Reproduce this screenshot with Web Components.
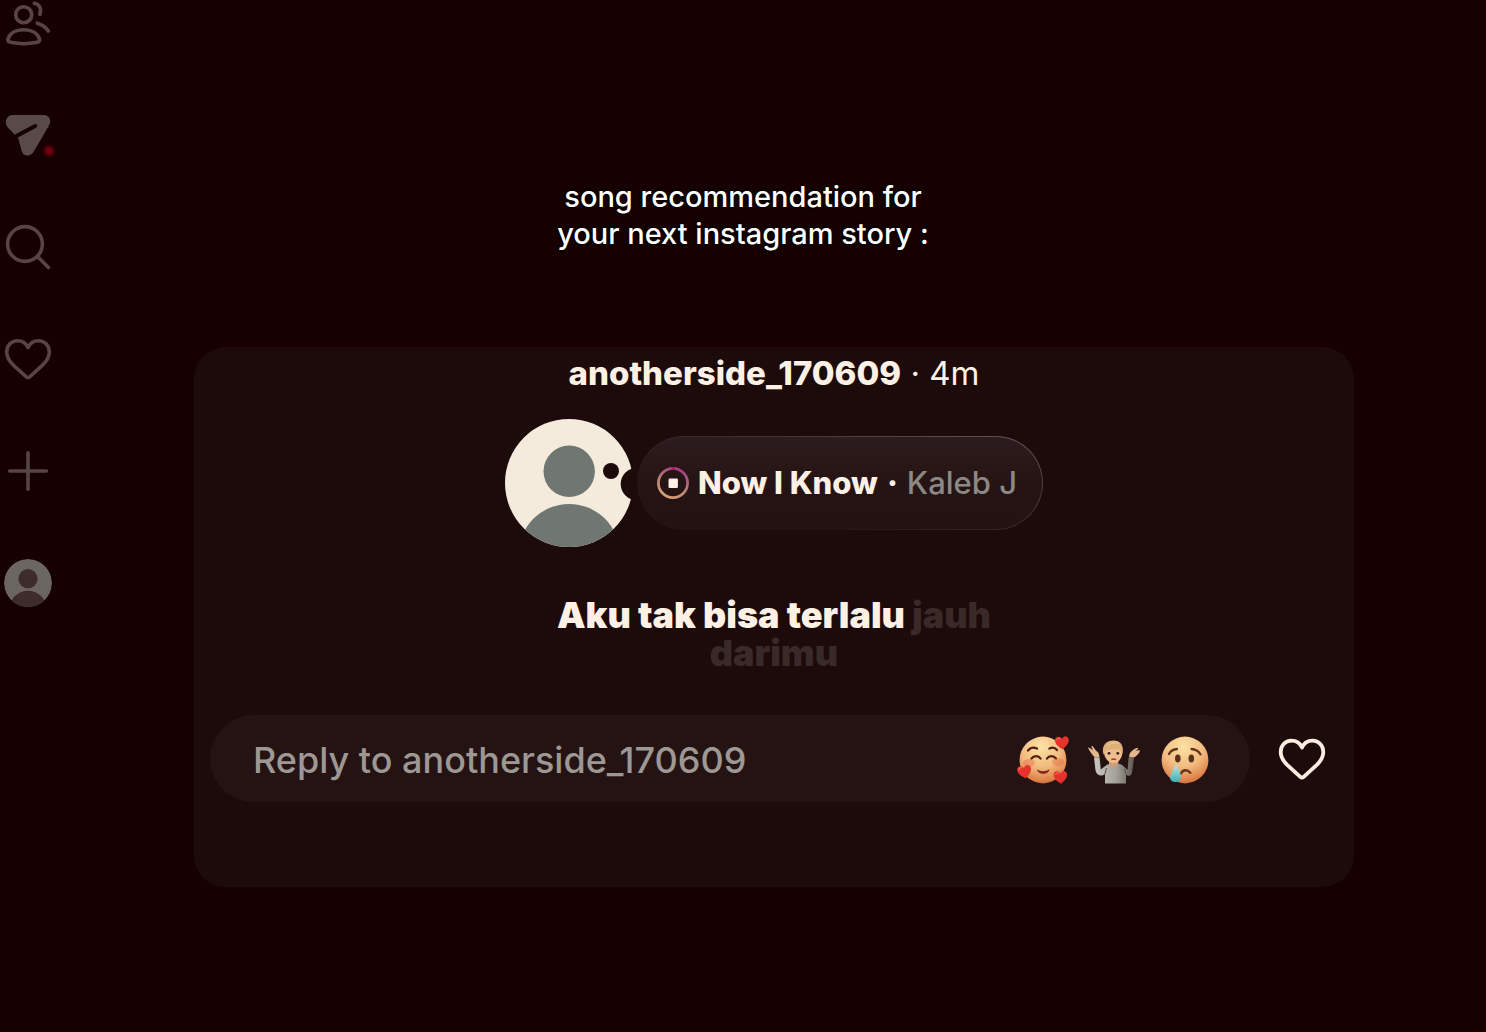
<!DOCTYPE html>
<html lang="id">
<head>
<meta charset="utf-8">
<meta name="viewport" content="width=device-width, initial-scale=1">
<title>Story</title>
<style>
  html { height: 100%; background: #170002; }
  body { margin: 0; min-height: 100%; font-family: Inter, "Noto Sans", sans-serif; color: #fdf0e4; }
</style>
</head>
<body>
<story-page>
  <side-nav slot="nav"></side-nav>
  <story-caption slot="caption">song recommendation for<br>your next instagram story :</story-caption>
  <story-card>
    <story-author slot="author" name="anotherside_170609" age="4m"></story-author>
    <music-note slot="music" song="Now I Know" artist="Kaleb J"></music-note>
    <lyric-lines slot="lyrics">Aku tak bisa terlalu <span slot="next">jauh</span><span slot="rest">darimu</span></lyric-lines>
    <reply-bar slot="reply" to="anotherside_170609"></reply-bar>
  </story-card>
</story-page>

<script>
class BaseElement extends HTMLElement {
  connectedCallback() {
    if (this.shadowRoot) return;
    this.attachShadow({ mode: "open" }).innerHTML =
      `<style>*{box-sizing:border-box} svg{display:block;overflow:visible} button,input,a{font:inherit;color:inherit;background:none;border:0;padding:0;margin:0}</style>` + this.render();
  }
}

const HEART = "M28 11.5C26 7 22 4.7 17.5 4.7C11 4.7 6.7 9.7 6.7 16C6.7 22 10 26 14 29.7L26.3 40.8C27.4 41.8 28.6 41.8 29.7 40.8L42 29.7C46 26 49.3 22 49.3 16C49.3 9.7 45 4.7 38.5 4.7C34 4.7 30 7 28 11.5Z";

customElements.define("story-page", class extends BaseElement {
  render() {
    return `<style>
      :host { display: grid; grid-template-columns: 56px minmax(0, 1fr); grid-template-rows: auto 1fr; }
      nav { grid-column: 1; grid-row: 1 / 3; z-index: 1; }
      header { grid-column: 1 / 3; grid-row: 1; padding-top: 178px; }
      main { grid-column: 2; grid-row: 2; padding: 95px 132px 40px 138px; }
    </style>
    <nav aria-label="Main"><slot name="nav"></slot></nav>
    <header><slot name="caption"></slot></header>
    <main><slot></slot></main>`;
  }
});

customElements.define("side-nav", class extends BaseElement {
  render() {
    const icons = {
      Friends: `<circle cx="23.7" cy="14.7" r="8"/><path d="M7.8 39.5C9.5 33.5 15.5 29.7 23.7 29.7S38 33.5 39.6 39.5C40 41.3 38.5 42 37 42.3C29 44 18.5 44 10.4 42.3C8.9 42 7.4 41.3 7.8 39.5Z"/><path d="M34.2 3.2C39.6 4 42 8.8 39.8 14.2M37.3 23.2C42 24.6 46 27.4 48.3 31"/>`,
      Messages: `<path class="solid" d="M13 3H43.5C49.5 3 52 8.5 49 13.5L33.5 40C31 44.5 23.5 45 21.8 39.5L18.3 26.5L8 15.8C3.5 11 6 3 13 3Z"/><path class="slit" d="M15.5 24.6L35.2 14"/><circle class="dot" cx="49" cy="39" r="4.8"/>`,
      Search: `<circle cx="25" cy="20" r="17.4"/><path d="M38 33L48.5 43.5"/>`,
      Likes: `<path d="${HEART}"/>`,
      Create: `<path d="M28 4.7V41.3M9.8 23H46.4"/>`,
      Profile: `<clipPath id="c"><circle cx="28" cy="23" r="24"/></clipPath><g clip-path="url(#c)" stroke="none"><circle cx="28" cy="23" r="24" fill="#6b6662"/><circle cx="28" cy="18.7" r="9.6" fill="#3e2c2c"/><circle cx="28" cy="49.6" r="18.8" fill="#3e2c2c"/></g>`
    };
    return `<style>
      :host { display: flex; flex-direction: column; gap: 66px; padding-left: 4px; }
      a { display: block; width: 48px; height: 46px; }
      svg { width: 48px; height: 46px; fill: none; stroke: #574546; stroke-width: 3.6; stroke-linecap: round; stroke-linejoin: round; }
      .solid { fill: #574a49; stroke: none; }
      .slit { stroke: #170002; stroke-width: 4; }
      .dot { fill: #750010; stroke: none; filter: blur(1.6px); }
    </style>` + Object.entries(icons).map(([n, s]) =>
      `<a href="#${n.toLowerCase()}" aria-label="${n}"><svg viewBox="4 0 48 46" aria-hidden="true">${s}</svg></a>`).join("");
  }
});

customElements.define("story-caption", class extends BaseElement {
  render() {
    return `<style>
      :host { display: block; text-align: center; font-size: 29px; line-height: 37px; font-weight: 500; color: #fff; text-shadow: 0 0 3px #000, 0 0 3px #000; }
      p { margin: 0; }
    </style><p><slot></slot></p>`;
  }
});

customElements.define("story-card", class extends BaseElement {
  render() {
    return `<style>
      :host { display: flex; flex-direction: column; background: #1d0a0a; border-radius: 32px; padding: 8px 16px 85px; }
      .music { margin-top: 27px; }
      .lyrics { margin-top: 49px; }
      .reply { margin-top: 43px; }
    </style>
    <slot name="author"></slot>
    <div class="music"><slot name="music"></slot></div>
    <div class="lyrics"><slot name="lyrics"></slot></div>
    <div class="reply"><slot name="reply"></slot></div>`;
  }
});

customElements.define("story-author", class extends BaseElement {
  render() {
    return `<style>
      :host { display: block; text-align: center; font-size: 33px; line-height: 37px; white-space: nowrap; }
      b { font-weight: 800; }
    </style><b>${this.getAttribute("name")}</b> · <time>${this.getAttribute("age")}</time>`;
  }
});

customElements.define("music-note", class extends BaseElement {
  render() {
    return `<style>
      :host { display: flex; justify-content: center; align-items: center; gap: 4px; }
      .avatar { width: 128px; height: 128px; flex: none; }
      .pill { display: flex; align-items: center; height: 94px; padding: 0 25px 0 19px; border: 1px solid transparent; border-radius: 47px; font-size: 31px; line-height: 38px; white-space: nowrap;
        background: linear-gradient(#2d1c1d, #261415 50%, #241213) padding-box, linear-gradient(195deg, #655556, #443435 35%, #251313 75%) border-box; }
      .ring { width: 32px; height: 32px; margin-right: 9px; }
      b { font-weight: 800; }
      .sep { margin: 0 9px; font-weight: 800; }
      .artist { font-weight: 500; color: #8b8885; }
    </style>
    <svg class="avatar" viewBox="0 0 128 128" role="img" aria-label="Profile picture">
      <clipPath id="a"><circle cx="64" cy="64" r="64"/></clipPath>
      <g clip-path="url(#a)"><rect width="128" height="128" fill="#f5ebdd"/><circle cx="64.2" cy="52.3" r="25.7" fill="#707773"/><circle cx="64.2" cy="135.7" r="50.7" fill="#707773"/></g>
      <circle cx="106" cy="52" r="8" fill="#1d0a0a"/><circle cx="132" cy="65" r="16.3" fill="#1d0a0a"/>
    </svg>
    <div class="pill">
      <svg class="ring" viewBox="0 0 32 32" aria-hidden="true">
        <defs><linearGradient id="r" x1=".75" y1="0" x2=".3" y2="1"><stop offset="0" stop-color="#a03b86"/><stop offset=".5" stop-color="#b57a72"/><stop offset="1" stop-color="#d7a273"/></linearGradient></defs>
        <circle cx="16" cy="16" r="14.6" fill="none" stroke="url(#r)" stroke-width="2.7"/><path d="M14.5 1.5H18" stroke="#b0185c" stroke-width="3"/><rect x="11.5" y="11.5" width="9.4" height="9.4" rx="1.2" fill="#fdf0e6"/>
      </svg><b>${this.getAttribute("song")}</b><span class="sep">·</span><span class="artist">${this.getAttribute("artist")}</span>
    </div>`;
  }
});

customElements.define("lyric-lines", class extends BaseElement {
  render() {
    return `<style>
      :host { display: block; text-align: center; font-size: 36px; line-height: 38px; font-weight: 900; }
      p { margin: 0; }
      .next { color: #3a2929; }
    </style><p><slot></slot><span class="next"><slot name="next"></slot></span></p><p class="next"><slot name="rest"></slot></p>`;
  }
});

const MINI_HEART = `<path d="M0-3.4C-1.5-7-7.6-6.6-7-1.6C-6.6 2-2.8 4.7.6 6.8C3.7 4.2 7 1 6.8-2.5C6.6-7 1.3-7.4 0-3.4Z" fill="#e5322d"/><path d="M-5-2.5C-4.8-4.4-3.2-4.8-2-4" stroke="#ff7a68" fill="none" stroke-linecap="round"/>`;
const FACE = `<defs><radialGradient id="f" cx=".46" cy=".22" r=".85"><stop offset="0" stop-color="#fce2a4"/><stop offset=".5" stop-color="#f2bc80"/><stop offset=".85" stop-color="#de8148"/><stop offset="1" stop-color="#b65a2c"/></radialGradient></defs><circle cx="26" cy="26" r="23.4" fill="url(#f)"/>`;

customElements.define("reply-bar", class extends BaseElement {
  render() {
    const emojis = {
      "Smiling face with hearts": FACE + `<g fill="none" stroke="#50200f" stroke-width="2.3" stroke-linecap="round"><path d="M11 16.5C13.5 13.4 17 13 20 14.6M32.5 14.6C35 13.2 38 13.6 40 16"/><path d="M14.5 24.5C17 21.4 21.5 21.4 23.5 24.5M30 24.5C32 21.4 36.5 21.4 39 24.5"/></g><path d="M20 35.2C23 37.8 29 37.8 32.5 35.2C32 41.2 21 41.6 20 35.2Z" fill="#7c2c19"/><ellipse cx="12" cy="29" rx="6" ry="4" fill="#e76743" opacity=".4"/><ellipse cx="41" cy="28" rx="6" ry="4" fill="#e76743" opacity=".4"/><g transform="translate(45 8.5)">${MINI_HEART}</g><g transform="translate(7.5 37.5) rotate(-8)">${MINI_HEART}</g><g transform="translate(43.5 43) scale(.98)">${MINI_HEART}</g>`,
      "Person shrugging": `<defs><linearGradient id="s"><stop offset="0" stop-color="#c9c7be"/><stop offset=".55" stop-color="#a4a198"/><stop offset="1" stop-color="#5e5751"/></linearGradient></defs>
        <g fill="#e5b68b"><path d="M7 23.5C4 21 1 16.5 0 13.6C1.6 13.6 3.6 15.4 5 16.4C3.8 14 3 12 3.9 11.8C5.6 12.4 7 16 8.7 17.2C10.4 18 11.4 20 11.4 23.5Z"/><path d="M46.2 23.5C49.5 21.5 51.6 18.6 52 16.6C50.6 15.8 48.6 16.6 47.4 16.8C49 15.6 50.8 14.9 50.3 14.1C48 13.6 45.4 15.4 43.8 17C42 18.4 41 20.4 41.2 23.5Z"/></g>
        <path d="M6 23.5H11.6L12.8 35.5L19 30.7C23 28.6 30 28.6 34 30.7L39.6 36L40.6 23.5H46.2L44 38.5C43.2 42.3 40 42.8 38 40.3V49.6H17V40C13 43.2 8.6 41 7.6 37Z" fill="url(#s)"/><path d="M17 40L18.5 34M38 40.3L36.5 35" stroke="#56504a" fill="none"/>
        <g transform="translate(1 4.4) scale(.93 .88)"><path d="M21.5 23H31.5V29C29 32 24 32 21.5 29Z" fill="#d99a70"/><path d="M16 14C16 7 20 4.2 26.5 4.2S36 8 36 15C35.7 22 32.5 28 26.5 28S16 22 16 14Z" fill="#efbd8e"/><path d="M15.5 18.5C12.8 6.5 20 2.2 26.4 2.4C33 2.4 38.3 7 35.7 18C34.8 15 34 13 31.5 12C27 13.2 21.5 12.7 18.6 13.2C17.3 14.6 16.5 16 15.5 18.5Z" fill="#deb07a"/><path d="M20 8C23 4.5 29 4.2 32 6" stroke="#f0ca99" stroke-width="2" fill="none" opacity=".6"/><circle cx="21.5" cy="17" r="1.6" fill="#3c2119"/><circle cx="31" cy="17" r="1.6" fill="#3c2119"/><path d="M24.6 24C25.8 23.2 27.4 23.2 28.6 24" stroke="#8b3e27" stroke-width="1.6" stroke-linecap="round" fill="none"/></g>`,
      "Crying face": FACE + `<defs><linearGradient id="t" x2="0" y2="1"><stop offset="0" stop-color="#c9e5da"/><stop offset="1" stop-color="#3eafb5"/></linearGradient></defs><g fill="none" stroke="#64371c" stroke-width="2.3" stroke-linecap="round"><path d="M10 20C12 16.5 14.5 15.2 18 15M32.5 15C36 15.2 39.5 17 41.5 20.3M22 39.5C24 35.3 28.5 35.3 31.3 38.8"/></g><ellipse cx="18.8" cy="24.5" rx="2.8" ry="4" fill="#5b3219"/><ellipse cx="32.3" cy="24.5" rx="2.8" ry="4" fill="#5b3219"/><path d="M17.5 30C14 35 11 40 11 43.2C11 49.6 22 49.8 22 43.2C22 39.5 19.5 34.5 17.5 30Z" fill="url(#t)"/>`
    };
    return `<style>
      :host { display: flex; align-items: center; gap: 28px; padding-right: 12px; }
      form { flex: 1; min-width: 0; height: 87px; display: flex; align-items: center; gap: 19px; padding: 2px 39px 0 43px; border-radius: 44px; background: #251313; }
      input { flex: 1; min-width: 0; height: 60px; font-size: 36px; font-weight: 500; outline: none; }
      input::placeholder { color: #9d9894; opacity: 1; }
      button { flex: none; display: block; cursor: pointer; }
      form svg { width: 52px; height: 52px; }
      .like svg { width: 48px; height: 46px; fill: none; stroke: #fdece2; stroke-width: 3.8; stroke-linejoin: round; }
    </style>
    <form><input type="text" aria-label="Reply" placeholder="Reply to ${this.getAttribute("to")}">` +
    Object.entries(emojis).map(([n, s]) => `<button type="button" aria-label="${n}"><svg viewBox="0 0 52 52" aria-hidden="true">${s}</svg></button>`).join("") +
    `</form><button class="like" type="button" aria-label="Like"><svg viewBox="4 0 48 46" aria-hidden="true"><path d="${HEART}"/></svg></button>`;
  }
});
</script>
</body>
</html>
